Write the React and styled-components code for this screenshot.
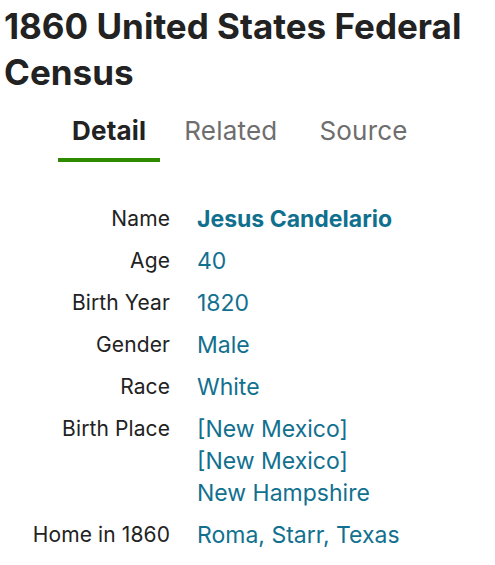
import React from 'react';
import styled, { createGlobalStyle } from 'styled-components';

const GlobalStyle = createGlobalStyle`
  body {
    margin: 0;
    background: #ffffff;
    font-family: Inter, "Noto Sans", Arial, sans-serif;
    color: #222222;
  }
`;

const Page = styled.div`
  padding: 0 4px;
`;

const Title = styled.h1`
  margin: 0;
  padding-top: 3px;
  font-size: 35px;
  line-height: 46px;
  font-weight: 700;
  color: #222222;
`;

const Tabs = styled.div`
  display: flex;
  gap: 10px;
  margin: 19px 0 0 54px;
`;

const Tab = styled.div`
  padding: 0 14px 10px;
  font-size: 26px;
  line-height: 34px;
  letter-spacing: 0.2px;
  font-weight: ${(p) => (p.$active ? 700 : 400)};
  color: ${(p) => (p.$active ? '#222222' : '#6e6e6e')};
  border-bottom: 4px solid ${(p) => (p.$active ? '#2e8b00' : 'transparent')};
  & + & + & {
    margin-left: 4px;
  }
`;

const Details = styled.dl`
  display: grid;
  grid-template-columns: 166px 1fr;
  column-gap: 27px;
  row-gap: 10px;
  margin: 41px 0 0;
`;

const Label = styled.dt`
  text-align: right;
  font-size: 21px;
  line-height: 32px;
  letter-spacing: 0.1px;
  color: #222222;
`;

const Value = styled.dd`
  margin: 0;
  font-size: 23px;
  line-height: 32px;
  color: #12708f;
  font-weight: ${(p) => (p.$bold ? 700 : 400)};
`;

const rows = [
  { label: 'Name', values: ['Jesus Candelario'], bold: true },
  { label: 'Age', values: ['40'] },
  { label: 'Birth Year', values: ['1820'] },
  { label: 'Gender', values: ['Male'] },
  { label: 'Race', values: ['White'] },
  { label: 'Birth Place', values: ['[New Mexico]', '[New Mexico]', 'New Hampshire'] },
  { label: 'Home in 1860', values: ['Roma, Starr, Texas'] },
];

export default function App() {
  return (
    <>
      <GlobalStyle />
      <Page>
        <Title>1860 United States Federal Census</Title>
        <Tabs>
          <Tab $active>Detail</Tab>
          <Tab>Related</Tab>
          <Tab>Source</Tab>
        </Tabs>
        <Details>
          {rows.map((r) => (
            <React.Fragment key={r.label}>
              <Label>{r.label}</Label>
              <Value $bold={r.bold}>
                {r.values.map((v, i) => (
                  <div key={i}>{v}</div>
                ))}
              </Value>
            </React.Fragment>
          ))}
        </Details>
      </Page>
    </>
  );
}
